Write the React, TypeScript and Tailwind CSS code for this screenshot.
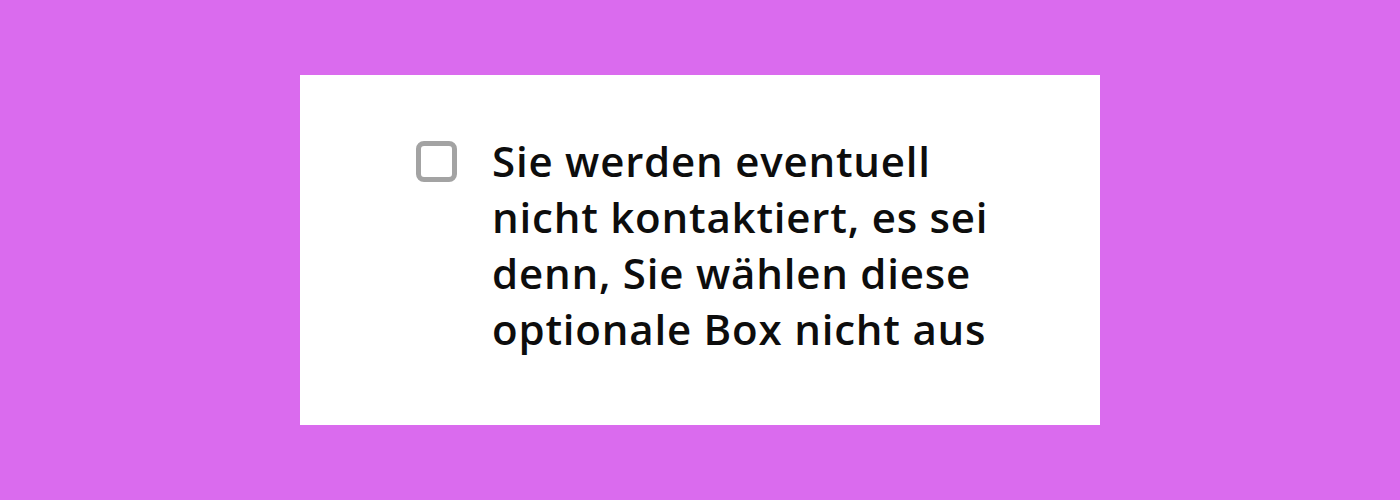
export default function App() {
  return (
    <div className="min-h-[500px] w-full bg-[#da6bee] flex items-center justify-center">
      <div className="w-[800px] h-[350px] bg-white pl-[116px] pt-[66px]">
        <label className="flex items-start gap-[35px] cursor-pointer">
          <span className="w-[41px] h-[41px] shrink-0 rounded-[8px] border-[5px] border-[#a3a3a3] bg-white" />
          <span className="-mt-[8px] font-['Open_Sans',sans-serif] font-semibold text-[42px] leading-[56px] tracking-[0.8px] text-[#0d0d0d]">
            Sie werden eventuell
            <br />
            nicht kontaktiert, es sei
            <br />
            denn, Sie wählen diese
            <br />
            optionale Box nicht aus
          </span>
        </label>
      </div>
    </div>
  )
}
